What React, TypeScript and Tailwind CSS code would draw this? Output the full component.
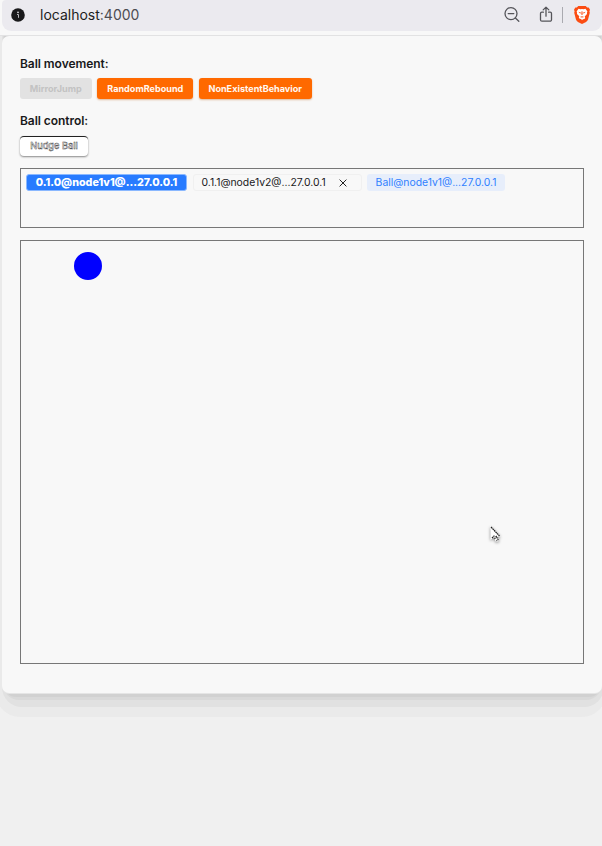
import React from "react";

function InfoIcon() {
  return (
    <svg className="ml-[9px] h-[14px] w-[14px] shrink-0" viewBox="0 0 14 14">
      <circle cx="7" cy="7" r="6.8" fill="#19191b" />
      <circle cx="7" cy="4.3" r=".9" fill="#d8d8dc" />
      <path d="M6 6.500h1.500v3.300" stroke="#b8b8bc" strokeWidth="1" fill="none" />
    </svg>
  );
}

function ZoomOutIcon() {
  return (
    <svg className="h-[18px] w-[18px] shrink-0" viewBox="0 0 18 18" fill="none" stroke="#55555a" strokeWidth="1.3" strokeLinecap="round">
      <circle cx="8" cy="7.6" r="6" />
      <path d="M5.2 7.6h5.6M12.4 12l3.4 3.200" />
    </svg>
  );
}

function ShareIcon() {
  return (
    <svg className="ml-[18px] h-[18px] w-[14px] shrink-0" viewBox="0 0 14 18" fill="none" stroke="#55555a" strokeWidth="1.3" strokeLinecap="round" strokeLinejoin="round">
      <path d="M4.4 6.2H2.8A1.300 1.300 0 0 0 1.500 7.500v6.200a1.500 1.500 0 0 0 1.500 1.500h8a1.500 1.500 0 0 0 1.500-1.500V7.500a1.300 1.300 0 0 0-1.300-1.300H9.600M7 10.200V1.200M4.200 3.900 7 1.100l2.800 2.800" />
    </svg>
  );
}

function BraveIcon() {
  return (
    <svg className="ml-[11px] h-[18px] w-[16px] shrink-0" viewBox="0 0 16 18">
      <path d="M4.300 0h7.400l1.500 1.600 1.500-.1 1.300 2.300-.6 1.500.4 1.500-1.700 6.500c-.4 1.300-1 1.900-2 2.600L8 18l-4.100-2.100c-1-.7-1.600-1.300-2-2.600L.2 6.800l.4-1.500L0 3.800l1.300-2.300 1.500.1z" fill="#fb4c12" />
      <path d="m4.500 2.800 2 .4L8 2.900l1.500.3 2-.4 1.900 2.700-.5 1.300.1 1.200-2.300 2.600.5 1.300-.8 1.100-1.500.3L8 14.200l-.9-1.200-1.500-.3-.8-1.100.5-1.300L3 8l.1-1.200-.5-1.300z" fill="#fff" />
      <path d="m4.300 5.700 2.600.7-.6 1.400zm7.400 0-2.600.7.6 1.400zM5.800 11 8 10.200l2.200.8L8 11.600zM7.600 5.200h.8l.3 3.200L8 9l-.7-.6z" fill="#fb4c12" />
    </svg>
  );
}

function AddressBar() {
  return (
    <header className="h-9 border-b border-[#e2e2e3] bg-[#f8f8f8] pl-0.5">
      <div className="flex h-[31px] items-center rounded-b-[9px] rounded-tl-[4px] bg-[#ebeaef] pb-px">
        <InfoIcon />
        <span className="ml-[15px] flex-1 text-[14px] leading-[30px] text-[#1d1d20]">
          localhost<span className="text-[#4d4d52]">:4000</span>
        </span>
        <ZoomOutIcon />
        <ShareIcon />
        <i className="ml-[9px] h-4 w-px bg-[#aaaab0]" />
        <BraveIcon />
        <i className="w-[12px]" />
      </div>
    </header>
  );
}

function Pointer() {
  return (
    <svg className="absolute left-[465px] top-[283px] h-[24px] w-[18px] drop-shadow-[0_1px_1.5px_rgba(0,0,0,0.45)]" viewBox="0 0 18 24">
      <path d="M4.500 2v14l3.200-2.800 2 4.200c1.800.5 3.100 0 3.400-1.400l-1.600-3.200 3.200-.4z" fill="#fff" />
      <path d="m5 3 8.500 9" stroke="#222" strokeWidth="1.200" strokeDasharray="1.800 .4" />
      <path d="m6 14 2-2 1.200 1M8.500 15l2-2.500 1.600 3.200-1.600 1" stroke="#222" strokeWidth="1.200" strokeDasharray="1.400 .6" fill="none" />
    </svg>
  );
}

export default function App() {
  return (
    <div className="h-[846px] w-[602px] overflow-hidden bg-[#f0f0f0] font-['Inter','Liberation_Sans',sans-serif] text-[#19191b]">
      <AddressBar />
      <div className="relative isolate pl-0.5">
        {/* stepped shadow below the card */}
        <div className="absolute -bottom-6 -left-1 -right-1 top-0 -z-10 rounded-b-[24px] bg-[#eaeaea]" />
        <div className="absolute -bottom-3.5 left-0.5 -right-0.5 top-0 -z-10 rounded-b-[20px] bg-[#e1e1e1]" />
        <div className="absolute -bottom-[7px] left-[3px] right-0 top-0 -z-10 rounded-b-[16px] bg-[#d9d9d9]" />
        <div className="absolute -bottom-1 left-1 right-px top-0 -z-10 rounded-b-[12px] bg-[#d1d1d1]" />
        <main className="h-[657px] rounded-[7px] bg-[#f8f8f8] px-[18px] pt-[18px] shadow-[0_1px_0_#e5e5e5]">
          <h2 className="h-[24px] pt-px text-[12px] font-semibold leading-[18px] tracking-[-0.05px]">Ball movement:</h2>
          <div className="flex h-[21px] gap-[5.7px] text-[9.1px] leading-[21px] text-[#fff8f2]">
            <button className="w-[71.6px] rounded-[3px] bg-[#e2e2e2] font-bold text-[#c3c3c3]">MirrorJump</button>
            <button className="w-[96px] rounded-[3px] bg-[#ff6900] font-bold shadow-[0_1px_2px_#ddb79a]">RandomRebound</button>
            <button className="w-[112.6px] rounded-[3px] bg-[#ff6900] font-bold shadow-[0_1px_2px_#ddb79a]">NonExistentBehavior</button>
          </div>
          <h2 className="mt-3 h-[25px] pt-px text-[12px] font-semibold leading-[18px] tracking-[-0.05px]">Ball control:</h2>
          <button className="block h-[20px] w-[68px] rounded-[4px] border-t border-[#222] bg-white pb-px text-[9.2px] font-medium leading-[18px] text-white shadow-[0_1px_2px_#888] [-webkit-text-stroke:0.4px_#333]">
            Nudge Ball
          </button>
          <section className="mt-3 flex h-[60px] items-start gap-[5.5px] border border-[#777] px-[5px] pt-[5px] text-[10.4px] leading-[17px]">
            <span className="h-[17px] w-[161px] rounded-[3px] border border-[#8ab8ff] bg-[#287bff] text-center text-[10.7px] font-extrabold leading-[15px] text-white">
              0.1.0@node1v1@...27.0.0.1
            </span>
            <span className="flex h-[17px] w-[169px] items-center rounded-[3px] border border-[#f0f0f0] pl-2">
              0.1.1@node1v2@...27.0.0.1
              <svg className="ml-[13px] h-[8px] w-[8px]" viewBox="0 0 8 8" stroke="#222" strokeWidth="1">
                <path d="m.6.6 6.800 6.800m0-6.800L.6 7.400" />
              </svg>
            </span>
            <span className="h-[17px] w-[138px] rounded-[3px] bg-[#e7eefb] text-center text-[#2f80ff]">
              Ball@node1v1@...27.0.0.1
            </span>
          </section>
          <section className="relative mt-3 h-[424px] border border-[#777]">
            <i className="absolute left-[53px] top-[11px] h-7 w-7 rounded-full bg-[#0000ff]" />
            <Pointer />
          </section>
        </main>
      </div>
    </div>
  );
}
